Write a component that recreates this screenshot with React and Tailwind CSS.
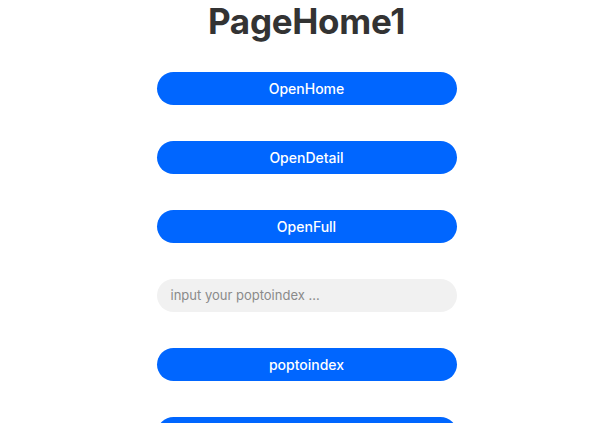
export default function App() {
  const btn = "h-[33px] w-[300px] rounded-full bg-[#0066ff] text-white text-[14px] font-medium flex items-center justify-center";
  return (
    <div className="w-[613px] h-[423px] overflow-hidden bg-white flex flex-col items-center" style={{ fontFamily: "Inter, 'Noto Sans', sans-serif" }}>
      <div className="h-[42px] flex items-center text-[35px] font-bold text-[#333333] leading-[42px] tracking-[-0.3px]">PageHome1</div>
      <div className="mt-[30px] flex flex-col items-center gap-[36px]">
        <div className={btn}>OpenHome</div>
        <div className={btn}>OpenDetail</div>
        <div className={btn}>OpenFull</div>
        <div className="h-[33px] w-[300px] rounded-full bg-[#f1f1f1] flex items-center pl-[14px] text-[13px] text-[#8a8a8a]">input your poptoindex ...</div>
        <div className={btn}>poptoindex</div>
        <div className={btn}></div>
      </div>
    </div>
  );
}
